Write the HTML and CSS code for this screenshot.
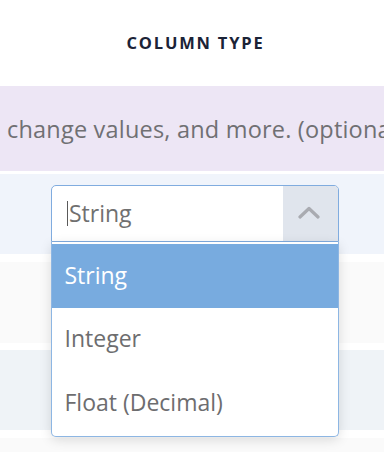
FILE: index.html
```html
<!DOCTYPE html>
<html lang="en">
<head>
<meta charset="utf-8">
<title>Column type</title>
<link rel="stylesheet" href="styles.css">
</head>
<body>
<div class="column">
  <div class="cell head">COLUMN TYPE</div>
  <div class="cell desc">change values, and more. (optional)</div>
  <div class="cell row-blue">
    <div class="select">
      <div class="select-value"><span class="caret"></span>String</div>
      <div class="select-arrow">
        <svg width="22" height="13" viewBox="0 0 22 13"><path d="M2 11 L11 2.5 L20 11" fill="none" stroke="#a9abb1" stroke-width="3.2" stroke-linecap="round" stroke-linejoin="round"/></svg>
      </div>
      <ul class="menu">
        <li class="item active">String</li>
        <li class="item">Integer</li>
        <li class="item">Float (Decimal)</li>
      </ul>
    </div>
  </div>
  <div class="cell row-grey gap8"></div>
  <div class="cell row-slate gap7"></div>
  <div class="cell row-grey row-last gap8"></div>
</div>
</body>
</html>
```
FILE: styles.css
```css
html, body {
  margin: 0;
  padding: 0;
  background: #ffffff;
  overflow: hidden;
}
body {
  width: 384px;
  height: 452px;
  font-family: "Open Sans", "Liberation Sans", sans-serif;
}
.column {
  width: 389px;
  display: flex;
  flex-direction: column;
}
.cell {
  box-sizing: border-box;
}
.head {
  height: 86px;
  display: flex;
  align-items: center;
  justify-content: center;
  padding-left: 2px;
  padding-bottom: 1px;
  font-size: 16.5px;
  font-weight: 700;
  letter-spacing: 1.8px;
  color: #1b2337;
}
.desc {
  height: 85px;
  background: #ede6f5;
  display: flex;
  align-items: center;
  padding-left: 7px;
  padding-top: 1px;
  font-size: 23.5px;
  letter-spacing: 0.2px;
  color: #707073;
  white-space: nowrap;
  overflow: hidden;
}
.row-blue {
  margin-top: 3px;
  height: 80px;
  background: #f0f4fb;
  padding-top: 11px;
  display: flex;
  justify-content: center;
  position: relative;
  z-index: 2;
}
.row-grey {
  height: 81px;
  background: #fafafa;
}
.row-last {
  height: 14px;
}
.row-slate {
  height: 80px;
  background: #eff3f7;
}
.gap8 { margin-top: 8px; }
.gap7 { margin-top: 7px; }

.select {
  position: relative;
  width: 288px;
  height: 57px;
  box-sizing: border-box;
  border: 1px solid #80acdf;
  border-radius: 5px 5px 0 0;
  background: #ffffff;
  display: flex;
}
.select-value {
  flex: 1;
  display: flex;
  align-items: center;
  padding-left: 15px;
  padding-bottom: 1px;
  font-size: 23px;
  color: #707070;
}
.caret {
  display: inline-block;
  width: 1.5px;
  height: 25px;
  background: #5a5a5a;
  margin-right: 1px;
  margin-top: 1px;
}
.select-arrow {
  width: 55px;
  background: #e0e5ed;
  border-radius: 0 4px 0 0;
  display: flex;
  align-items: center;
  justify-content: center;
  padding-bottom: 2px;
  padding-right: 2px;
  box-sizing: border-box;
}
.menu {
  position: absolute;
  left: -1px;
  top: 56px;
  width: 288px;
  box-sizing: border-box;
  margin: 0;
  padding: 2px 0 1px;
  list-style: none;
  background: #ffffff;
  border: 1px solid #8db6e3;
  border-top: 0;
  border-radius: 0 0 5px 5px;
  box-shadow: 0 3px 12px rgba(0, 0, 0, 0.13);
}
.item {
  height: 63.5px;
  display: flex;
  align-items: center;
  padding-left: 13px;
  padding-bottom: 2px;
  box-sizing: border-box;
  font-size: 23px;
  color: #6d6d6f;
}
.item.active {
  background: #78abdf;
  color: #ffffff;
}
```
